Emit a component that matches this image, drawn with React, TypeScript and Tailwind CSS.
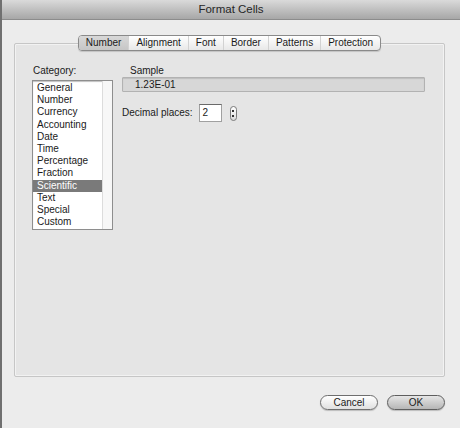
import React from 'react';

const categories = [
  'General',
  'Number',
  'Currency',
  'Accounting',
  'Date',
  'Time',
  'Percentage',
  'Fraction',
  'Scientific',
  'Text',
  'Special',
  'Custom',
];

const tabs = ['Number', 'Alignment', 'Font', 'Border', 'Patterns', 'Protection'];

const font = { fontFamily: '"Liberation Sans", Arial, sans-serif' };

export default function App() {
  return (
    <div
      className="w-[460px] h-[428px] bg-[#ececec] border-l-2 border-[#707070] flex flex-col text-[#1a1a1a] overflow-hidden"
      style={font}
    >
      {/* title bar */}
      <div className="h-[20px] shrink-0 bg-gradient-to-b from-[#dadada] to-[#a7a7a7] border-b border-[#8c8c8c] flex items-center justify-center">
        <span className="text-[11.5px] leading-none text-[#262626]">Format Cells</span>
      </div>

      <div className="flex-1 flex flex-col pl-[12px] pr-[15px]">
        {/* group box */}
        <div className="mt-[23px] h-[334px] bg-[#e5e5e5] border border-[#c6c6c6] rounded-[2px] shadow-[inset_0_0_0_1px_#f2f2f2] flex flex-col">
          {/* tabs */}
          <div className="-mt-[9px] flex justify-center">
            <div className="flex h-[16px] rounded-[4px] border border-[#8a8a8a] bg-gradient-to-b from-[#ffffff] to-[#e8e8e8] overflow-hidden text-[10px] leading-none shadow-[0_1px_1px_rgba(0,0,0,0.15)]">
              {tabs.map((t, i) => (
                <div
                  key={t}
                  className={
                    'flex items-center px-[7px] ' +
                    (i > 0 ? 'border-l border-[#d2d2d2] ' : '') +
                    (i === 0 ? 'bg-gradient-to-b from-[#d8d8d8] to-[#c6c6c6] ' : '')
                  }
                >
                  {t}
                </div>
              ))}
            </div>
          </div>

          <div className="flex pl-[17px] pt-[14px]">
            {/* category column */}
            <div className="flex flex-col w-[90px]">
              <span className="text-[10px] leading-[12px] pl-[1px]">Category:</span>
              <div className="mt-[3px] w-[81px] h-[150px] bg-white border border-[#8e8e8e] shadow-[inset_0_1px_1px_rgba(0,0,0,0.25)] flex">
                <div className="flex-1 flex flex-col pt-[1px]">
                  {categories.map((c) => (
                    <div
                      key={c}
                      className={
                        'h-[12.2px] flex items-center pl-[4px] text-[10px] leading-none ' +
                        (c === 'Scientific' ? 'bg-[#7a7a7a] text-white' : '')
                      }
                    >
                      {c}
                    </div>
                  ))}
                </div>
                <div className="w-[10px] border-l border-[#dcdcdc] bg-[#f7f7f7]" />
              </div>
            </div>

            {/* right side */}
            <div className="flex flex-col w-[303px]">
              <span className="text-[10px] leading-[12px] pl-[8px]">Sample</span>
              <div className="h-[15px] bg-[#d7d7d7] border border-[#b2b2b2] rounded-[1px] shadow-[inset_0_1px_1px_rgba(0,0,0,0.12)] flex items-center pl-[12px] text-[10px] leading-none">
                1.23E-01
              </div>
              <div className="mt-[12px] flex items-center">
                <span className="text-[10px] leading-none">Decimal places:</span>
                <div className="ml-[6px] w-[23px] h-[18px] bg-white border border-[#a0a0a0] border-t-[#6a6a6a] flex items-center pl-[3px] text-[10px] leading-none">
                  2
                </div>
                <div className="ml-[8px] w-[7px] h-[15px] rounded-[4px] border border-[#7a7a7a] bg-gradient-to-b from-[#ffffff] to-[#dddddd] flex flex-col items-center justify-center gap-[3px]">
                  <div className="w-[2px] h-[2px] bg-[#333]" />
                  <div className="w-[2px] h-[2px] bg-[#333]" />
                </div>
              </div>
            </div>
          </div>
        </div>

        {/* buttons */}
        <div className="mt-[18px] flex justify-end gap-[9px]">
          <button className="w-[58px] h-[15px] rounded-full border border-[#6e6e6e] bg-gradient-to-b from-[#ffffff] to-[#e0e0e0] text-[10px] leading-none shadow-[0_1px_1px_rgba(0,0,0,0.2)]">
            Cancel
          </button>
          <button className="w-[58px] h-[15px] rounded-full border border-[#5e5e5e] bg-gradient-to-b from-[#e6e6e6] to-[#b6b6b6] text-[10px] leading-none shadow-[0_1px_1px_rgba(0,0,0,0.2)]">
            OK
          </button>
        </div>
      </div>
    </div>
  );
}
